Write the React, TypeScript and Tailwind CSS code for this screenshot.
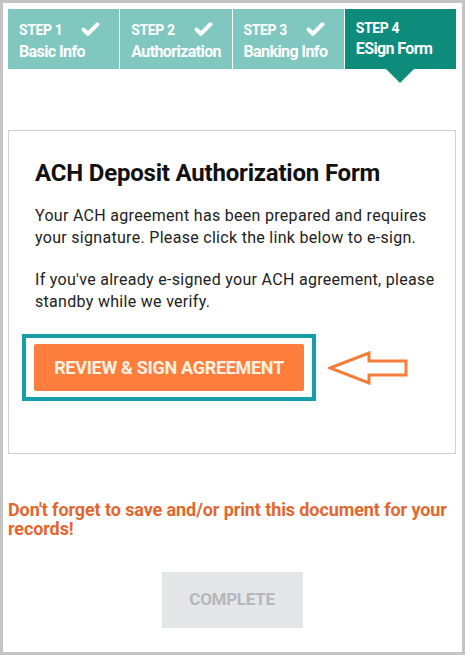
import { Check } from 'lucide-react';

const steps = [
  { n: 1, label: 'Basic Info', done: true },
  { n: 2, label: 'Authorization', done: true },
  { n: 3, label: 'Banking Info', done: true },
  { n: 4, label: 'ESign Form', done: false },
];

export default function App() {
  return (
    <div className="h-[655px] w-[465px] border-[3px] border-[#c4c4c4] bg-white pl-[5px] pr-[6px] pt-[6px] font-['Roboto',sans-serif]">
      {/* step tabs */}
      <div className="flex gap-px">
        {steps.map(s => (
          <div
            key={s.n}
            className={`relative h-[60px] flex-1 pl-[11px] pt-[10px] text-white ${s.done ? 'bg-[#7fc7bf]' : 'bg-[#0d8c7c]'}`}
          >
            <div className="flex items-center text-[14px] font-bold leading-[18px] tracking-[-0.4px]">
              STEP {s.n}
              {s.done && <Check className="ml-[18px] h-[21px] w-[21px]" strokeWidth={4.5} />}
            </div>
            <div className="mt-[2px] text-[16px] font-bold leading-[20px] tracking-[-0.6px]">{s.label}</div>
            {!s.done && (
              <div className="absolute left-1/2 top-full h-0 w-0 -translate-x-1/2 border-x-[14px] border-t-[14px] border-x-transparent border-t-[#0d8c7c]" />
            )}
          </div>
        ))}
      </div>

      {/* form card */}
      <div className="mt-[61px] border border-[#cfcfcf] pb-[52px] pl-[26px] pr-[10px] pt-[26px]">
        <h1 className="text-[24px] font-bold leading-[32px] tracking-[-0.2px] text-[#111]">ACH Deposit Authorization Form</h1>
        <p className="mt-[16px] text-[16px] leading-[22px] tracking-[0.3px] text-[#222]">
          Your ACH agreement has been prepared and requires your signature. Please click the link below to e-sign.
        </p>
        <p className="mt-[20px] text-[16px] leading-[22px] tracking-[0.3px] text-[#222]">
          If you've already e-signed your ACH agreement, please standby while we verify.
        </p>
        <div className="-ml-[13px] mt-[21px] flex items-center">
          <div className="border-[4px] border-[#179fa9] px-[8px] py-[6px]">
            <button className="h-[47px] w-[270px] rounded-[2px] bg-[#fd7e3d] text-[18px] font-bold tracking-[-0.3px] text-[#fdf1e2]">
              REVIEW &amp; SIGN AGREEMENT
            </button>
          </div>
          <svg className="ml-[12px]" width="82" height="34" viewBox="0 0 82 34">
            <path
              d="M2 17 L41 2 L41 10 L78 10 L78 24 L41 24 L41 32 Z"
              fill="none"
              stroke="#f57d3b"
              strokeWidth="3"
              strokeLinejoin="miter"
            />
          </svg>
        </div>
      </div>

      <p className="mt-[46px] text-[18px] font-bold leading-[19px] tracking-[-0.1px] text-[#e2672f]">
        Don't forget to save and/or print this document for your records!
      </p>

      <div className="mt-[34px] flex justify-center">
        <button className="h-[56px] w-[141px] bg-[#e5e6e8] text-[17px] font-bold tracking-[-0.3px] text-[#b4b7bc]">
          COMPLETE
        </button>
      </div>
    </div>
  );
}
